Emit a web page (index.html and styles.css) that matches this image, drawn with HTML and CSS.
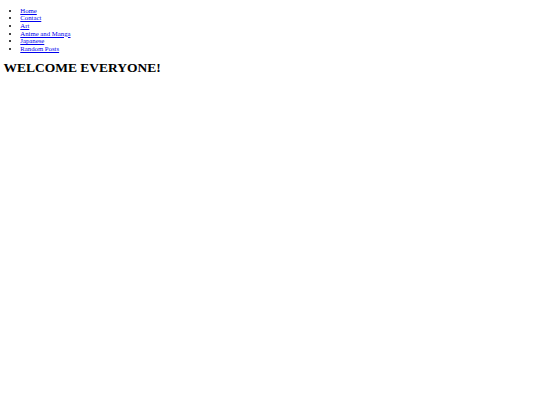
FILE: index.html
```html
<!DOCTYPE html>
<html>
<head>
<meta charset="utf-8">
<link rel="stylesheet" href="styles.css">
</head>
<body class="page">
<ul class="nav">
  <li><a href="#">Home</a></li>
  <li><a href="#">Contact</a></li>
  <li><a href="#">Art</a></li>
  <li><a href="#">Anime and Manga</a></li>
  <li><a href="#">Japanese</a></li>
  <li><a href="#">Random Posts</a></li>
</ul>
<h1 class="title">WELCOME EVERYONE!</h1>
</body>
</html>
```
FILE: styles.css
```css
.page {
  margin: 3.4px;
  font-family: "Liberation Serif", "Times New Roman", serif;
  font-size: 6.75px;
  line-height: 7.6px;
  color: #000;
  background: #fff;
}
.nav {
  margin: 3.4px 0 0;
  padding-left: 16.9px;
}
.nav a {
  color: #0000ee;
}
.title {
  font-size: 13.5px;
  line-height: 15.5px;
  margin: 8px 0;
}
```
